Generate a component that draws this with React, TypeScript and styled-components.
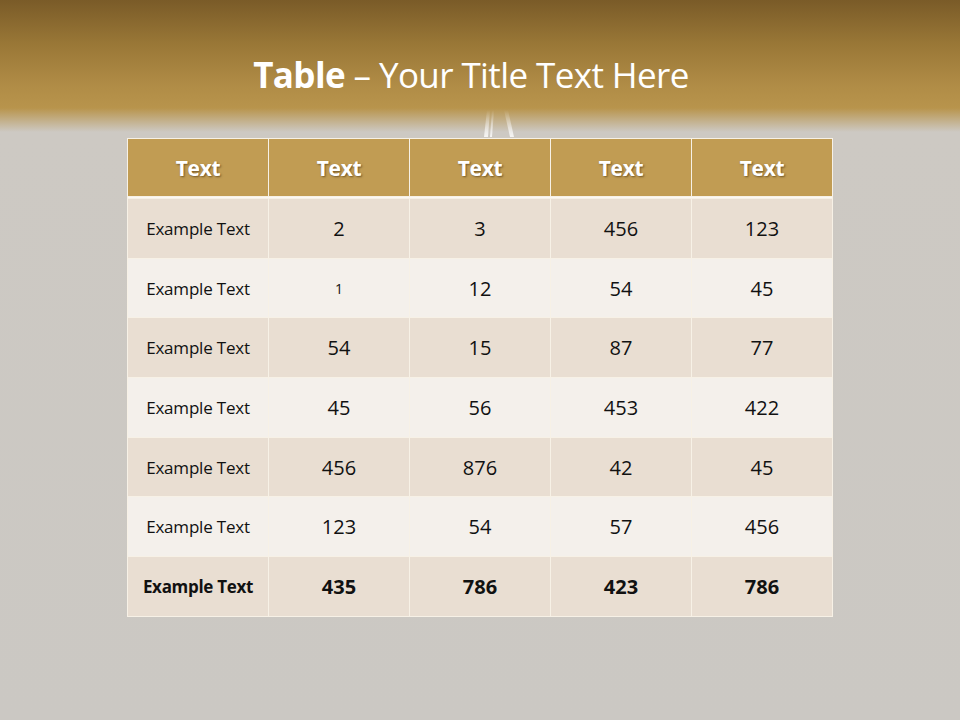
import React from "react";
import styled, { createGlobalStyle } from "styled-components";

const GlobalStyle = createGlobalStyle`
  html, body {
    margin: 0;
    padding: 0;
    background: #cbc8c3;
  }
  body {
    font-family: "Open Sans", "Liberation Sans", sans-serif;
  }
`;

const header = ["Text", "Text", "Text", "Text", "Text"];

const rows: { label: string; values: string[]; small?: number }[] = [
  { label: "Example Text", values: ["2", "3", "456", "123"] },
  { label: "Example Text", values: ["1", "12", "54", "45"], small: 0 },
  { label: "Example Text", values: ["54", "15", "87", "77"] },
  { label: "Example Text", values: ["45", "56", "453", "422"] },
  { label: "Example Text", values: ["456", "876", "42", "45"] },
  { label: "Example Text", values: ["123", "54", "57", "456"] },
];

const totals = { label: "Example Text", values: ["435", "786", "423", "786"] };

function App() {
  return (
    <Slide>
      <GlobalStyle />
      <Banner>
        <Title>
          <b>Table</b> – Your Title Text Here
        </Title>
      </Banner>
      <Streaks width="60" height="30" viewBox="0 0 60 30">
        <defs>
          <linearGradient id="fade" x1="0" y1="0" x2="0" y2="1">
            <stop offset="0" stopColor="#fff" stopOpacity="0" />
            <stop offset="1" stopColor="#fff" stopOpacity="0.8" />
          </linearGradient>
        </defs>
        <path d="M10 0 L13 0 L11 27 L7 27 Z" fill="url(#fade)" />
        <path d="M15 0 L17 0 L15 27 L13 27 Z" fill="url(#fade)" />
        <path d="M27 0 L31 0 L37 27 L33 27 Z" fill="url(#fade)" />
      </Streaks>
      <TableWrap>
        <Grid>
          {header.map((h, i) => (
            <HeadCell key={i}>{h}</HeadCell>
          ))}
          <Divider />
          {rows.map((r, ri) => (
            <React.Fragment key={ri}>
              <LabelCell $alt={ri % 2 === 1}>{r.label}</LabelCell>
              {r.values.map((v, vi) => (
                <NumCell key={vi} $alt={ri % 2 === 1} $small={r.small === vi}>
                  {v}
                </NumCell>
              ))}
            </React.Fragment>
          ))}
          <LabelCell $bold>{totals.label}</LabelCell>
          {totals.values.map((v, vi) => (
            <NumCell key={vi} $bold>
              {v}
            </NumCell>
          ))}
        </Grid>
      </TableWrap>
    </Slide>
  );
}

export default App;

const Slide = styled.div`
  position: relative;
  width: 960px;
  height: 720px;
  overflow: hidden;
  background: linear-gradient(
    180deg,
    #7a5b28 0px,
    #9a7837 45px,
    #b08c46 85px,
    #b8944c 108px,
    #cdc9c3 132px,
    #cbc8c3 100%
  );
`;

const Banner = styled.div`
  height: 138px;
  display: flex;
  justify-content: center;
  padding-top: 51px;
  padding-right: 18px;
  box-sizing: border-box;
`;

const Title = styled.h1`
  margin: 0;
  height: 48px;
  font-family: "Open Sans", "Liberation Sans", sans-serif;
  font-weight: 400;
  font-size: 35px;
  line-height: 48px;
  color: #ffffff;
  letter-spacing: -0.6px;

  b {
    font-weight: 700;
  }
`;

const Streaks = styled.svg`
  position: absolute;
  left: 477px;
  top: 110px;
`;

const TableWrap = styled.div`
  display: flex;
  margin-left: 127px;
`;

const Grid = styled.div`
  display: grid;
  grid-template-columns: repeat(5, 140px);
  grid-template-rows: 57px 1px repeat(7, 58.7px);
  gap: 1px;
  background: #f7f1e6;
  border: 1px solid #f7f1e6;
`;

const HeadCell = styled.div`
  background: #c19c53;
  color: #ffffff;
  font-family: "Open Sans", "Liberation Sans", sans-serif;
  font-weight: 700;
  font-size: 21px;
  letter-spacing: -0.3px;
  display: flex;
  align-items: center;
  justify-content: center;
  text-shadow: 1px 1px 2px rgba(60, 40, 10, 0.6);
`;

const Divider = styled.div`
  grid-column: 1 / -1;
  background: #fbf8f3;
`;

const Cell = styled.div<{ $alt?: boolean; $bold?: boolean }>`
  background: ${(p) => (p.$alt ? "#f4f0eb" : "#e9ded2")};
  color: #111;
  display: flex;
  align-items: center;
  justify-content: center;
  font-family: "Open Sans", "Liberation Sans", sans-serif;
  font-weight: ${(p) => (p.$bold ? 700 : 400)};
`;

const LabelCell = styled(Cell)`
  font-size: 17px;
  letter-spacing: ${(p) => (p.$bold ? "-0.3px" : "-0.2px")};
`;

const NumCell = styled(Cell)<{ $small?: boolean }>`
  font-size: ${(p) => (p.$small ? "14px" : "20px")};
`;
